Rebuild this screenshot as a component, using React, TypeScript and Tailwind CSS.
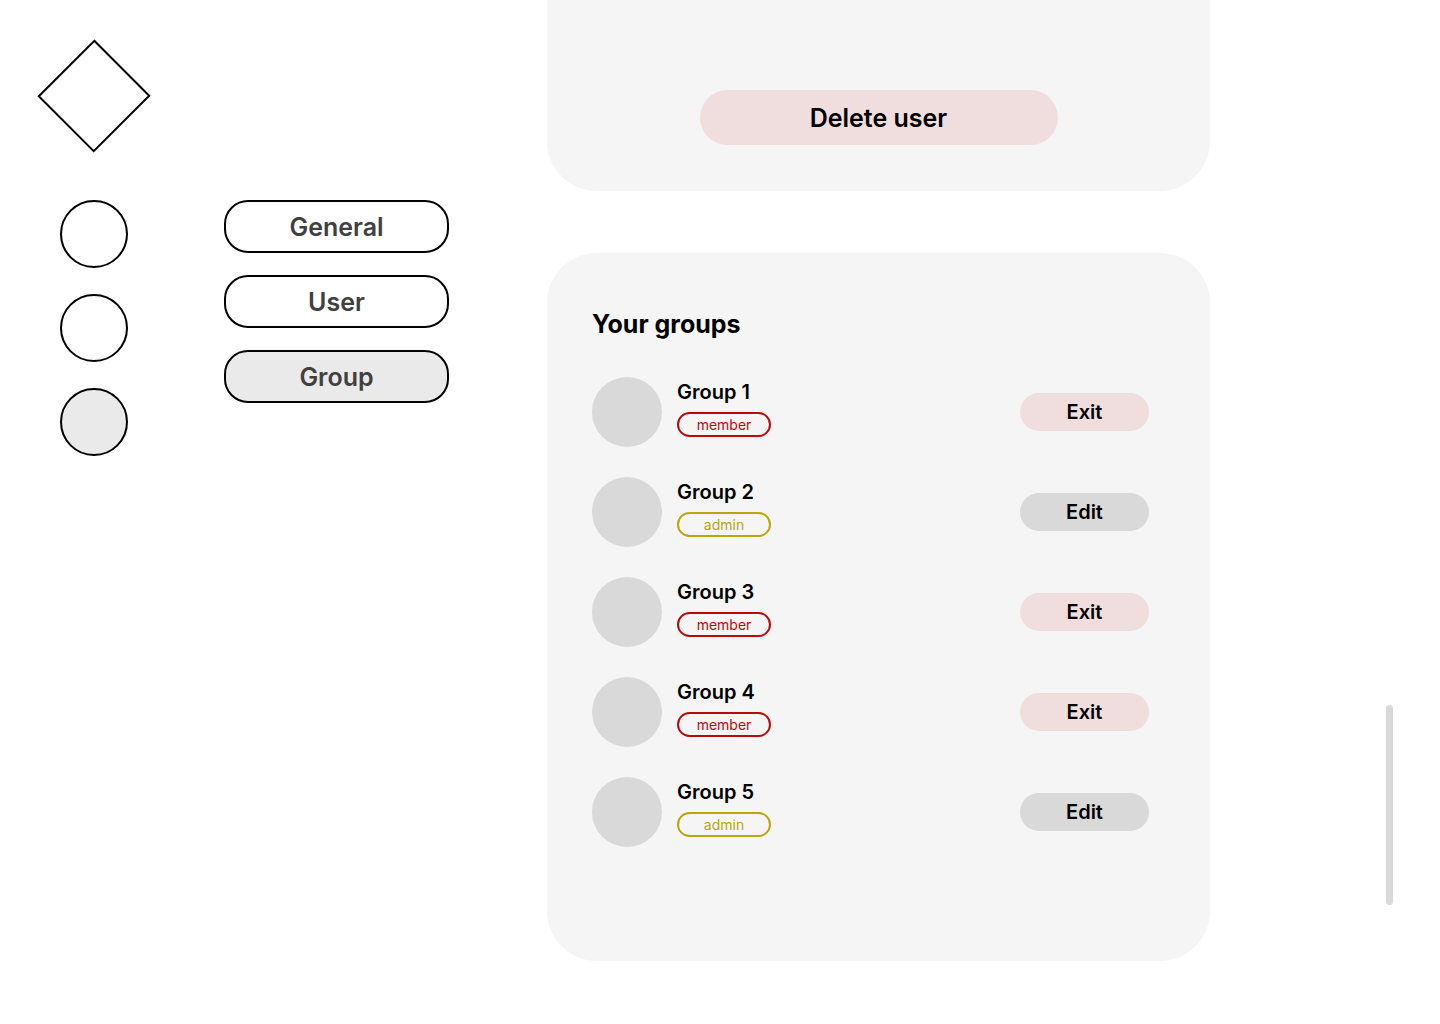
type Role = "member" | "admin";

const groups: { name: string; role: Role }[] = [
  { name: "Group 1", role: "member" },
  { name: "Group 2", role: "admin" },
  { name: "Group 3", role: "member" },
  { name: "Group 4", role: "member" },
  { name: "Group 5", role: "admin" },
];

const sections = ["General", "User", "Group"];
const activeSection = "Group";

const shortcuts = [
  { label: "Shortcut 1", active: false },
  { label: "Shortcut 2", active: false },
  { label: "Shortcut 3", active: true },
];

function Rail() {
  return (
    <aside className="flex w-[188px] shrink-0 flex-col items-center pt-10">
      <a href="#home" aria-label="Home" className="block">
        <svg
          width="114"
          height="114"
          viewBox="0 0 114 114"
          fill="none"
          stroke="black"
          strokeWidth="2"
          className="overflow-visible"
        >
          <path d="M57.3 0.8L112.2 55.7L56.7 111.2L1.8 56.3Z" />
        </svg>
      </a>
      <div className="mt-[46px] flex flex-col gap-[26px]">
        {shortcuts.map((s) => (
          <button
            key={s.label}
            type="button"
            aria-label={s.label}
            className={`size-[68px] rounded-full border-2 border-black ${s.active ? "bg-[#eaeaea]" : "bg-white"}`}
          />
        ))}
      </div>
    </aside>
  );
}

function SectionNav() {
  return (
    <nav aria-label="Settings" className="ml-9 flex w-[225px] shrink-0 flex-col gap-[22px] pt-[200px]">
      {sections.map((s) => (
        <button
          key={s}
          type="button"
          className={`h-[53px] rounded-3xl border-2 border-black pt-0.5 text-[25px] font-semibold text-[#404040] ${
            s === activeSection ? "bg-[#eaeaea]" : "bg-white"
          }`}
        >
          {s}
        </button>
      ))}
    </nav>
  );
}

function GroupRow({ name, role }: { name: string; role: Role }) {
  const admin = role === "admin";
  return (
    <li className="flex items-center">
      <div className="size-[70px] shrink-0 rounded-full bg-[#d9d9d9]" />
      <div className="ml-[15px] flex w-[94px] flex-col gap-2 pb-2">
        <h3 className="text-[20px] leading-6 font-semibold whitespace-nowrap">{name}</h3>
        <span
          className={`flex h-[25px] items-center justify-center rounded-full border-2 pt-0.5 text-[14px] leading-5 ${
            admin ? "border-[#b9a60a] text-[#b9a60a]" : "border-[#b90a0a] text-[#b90a0a]"
          }`}
        >
          {role}
        </span>
      </div>
      <button
        type="button"
        className={`ml-auto h-[38px] w-[129px] rounded-full text-[20px] font-semibold ${
          admin ? "bg-[#d9d9d9]" : "bg-[#f0dede]"
        }`}
      >
        {admin ? "Edit" : "Exit"}
      </button>
    </li>
  );
}

export default function App() {
  return (
    <div className="flex min-h-screen bg-white font-['Inter',sans-serif] text-black">
      <Rail />
      <SectionNav />
      <main className="ml-[98px] flex min-w-0 flex-1 flex-col gap-[62px] pb-[63px]">
        <section className="flex justify-center rounded-b-[50px] bg-[#f5f5f5] pt-[90px] pb-[46px]">
          <button type="button" className="h-[55px] w-[358px] rounded-full bg-[#f0dede] pt-0.5 text-[25px] font-semibold">
            Delete user
          </button>
        </section>
        <section className="flex-1 rounded-[50px] bg-[#f5f5f5] pt-14 pr-[61px] pb-[114px] pl-[45px]">
          <h2 className="text-[25px] leading-[30px] font-bold">Your groups</h2>
          <ul className="mt-[38px] flex flex-col gap-[30px]">
            {groups.map((g) => (
              <GroupRow key={g.name} name={g.name} role={g.role} />
            ))}
          </ul>
        </section>
      </main>
      <div className="flex w-[230px] shrink-0 items-end justify-end pr-[47px] pb-[119px]">
        <div className="h-[200px] w-[7px] rounded-full bg-[#d9d9d9]" />
      </div>
    </div>
  );
}
